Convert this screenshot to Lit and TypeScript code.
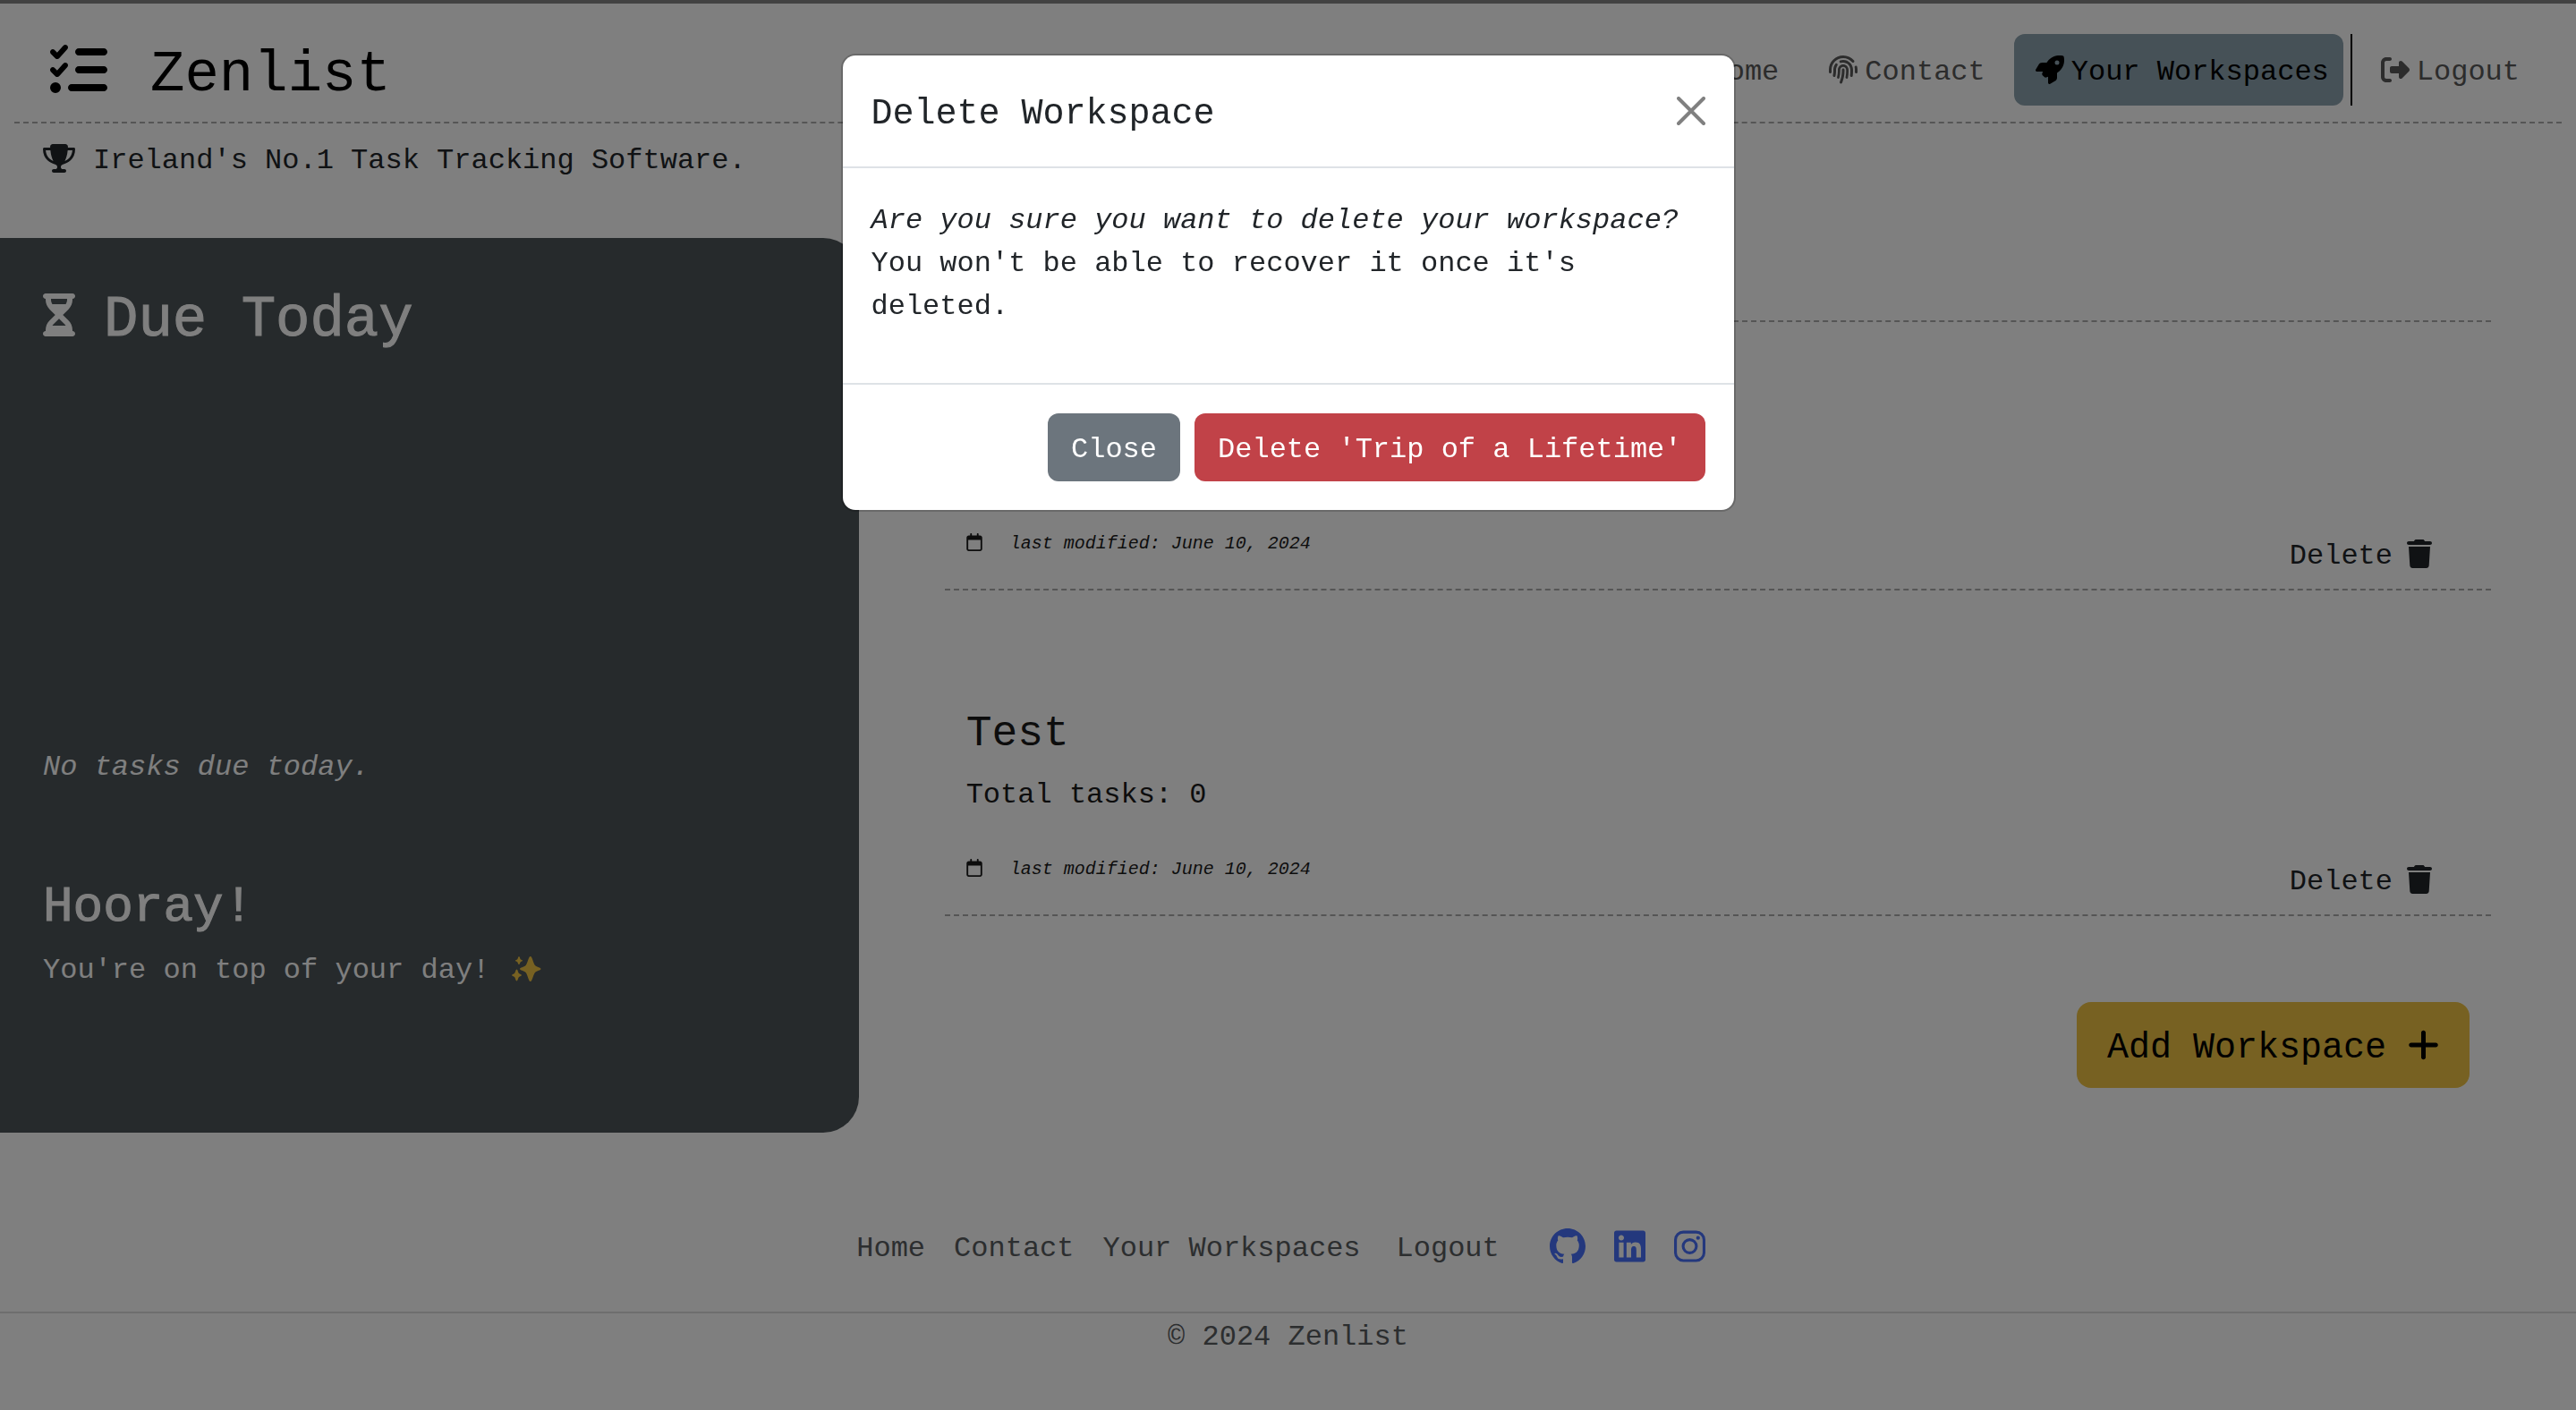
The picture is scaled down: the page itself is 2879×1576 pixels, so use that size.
import { LitElement, html, css, svg } from "lit";
import { customElement, property } from "lit/decorators.js";

interface Glyph {
  box: string;
  d: string;
}

const GLYPHS: Record<string, Glyph> = {
  listCheck: {
    box: "0 0 512 512",
    d: "M152.1 38.2c9.9 8.9 10.7 24 1.8 33.9l-72 80c-4.4 4.9-10.6 7.8-17.2 7.9s-12.9-2.4-17.6-7L7 113C-2.3 103.6-2.3 88.4 7 79s24.6-9.4 33.9 0l22.1 22.1 55.1-61.2c8.9-9.9 24-10.7 33.9-1.8zm0 160c9.9 8.9 10.7 24 1.8 33.9l-72 80c-4.4 4.9-10.6 7.8-17.2 7.9s-12.9-2.4-17.6-7L7 273c-9.4-9.4-9.4-24.6 0-33.9s24.6-9.4 33.9 0l22.1 22.1 55.1-61.2c8.9-9.9 24-10.7 33.9-1.8zM224 96c0-17.7 14.3-32 32-32l224 0c17.7 0 32 14.3 32 32s-14.3 32-32 32l-224 0c-17.7 0-32-14.3-32-32zm0 160c0-17.7 14.3-32 32-32l224 0c17.7 0 32 14.3 32 32s-14.3 32-32 32l-224 0c-17.7 0-32-14.3-32-32zM160 416c0-17.7 14.3-32 32-32l288 0c17.7 0 32 14.3 32 32s-14.3 32-32 32l-288 0c-17.7 0-32-14.3-32-32zM48 368a48 48 0 1 1 0 96 48 48 0 1 1 0-96z",
  },
  trophy: {
    box: "0 0 576 512",
    d: "M400 0L176 0c-26.5 0-48.1 21.8-47.1 48.2c.2 5.3 .4 10.6 .7 15.8L24 64C10.7 64 0 74.7 0 88c0 92.6 33.5 157 78.5 200.7c44.3 43.1 98.3 64.8 138.1 75.8c23.4 6.5 39.4 26 39.4 45.6c0 20.9-17 37.9-37.9 37.9L192 448c-17.7 0-32 14.3-32 32s14.3 32 32 32l192 0c17.7 0 32-14.3 32-32s-14.3-32-32-32l-26.1 0C337 448 320 431 320 410.1c0-19.6 15.9-39.2 39.4-45.6c39.9-11 93.9-32.7 138.2-75.8C542.5 245 576 180.6 576 88c0-13.3-10.7-24-24-24L446.4 64c.3-5.2 .5-10.4 .7-15.8C448.1 21.8 426.5 0 400 0zM48.9 112l84.4 0c9.1 90.1 29.2 150.3 51.9 190.6c-24.9-11-50.8-26.5-73.2-48.3c-32-31.1-58-76-63-142.3zM464.1 254.3c-22.4 21.8-48.3 37.3-73.2 48.3c22.7-40.3 42.8-100.5 51.9-190.6l84.4 0c-5.1 66.3-31.1 111.2-63 142.3z",
  },
  hourglass: {
    box: "0 0 384 512",
    d: "M32 0C14.3 0 0 14.3 0 32S14.3 64 32 64l0 11c0 42.4 16.9 83.1 46.9 113.1L146.7 256 78.9 323.9C48.9 353.9 32 394.6 32 437l0 11c-17.7 0-32 14.3-32 32s14.3 32 32 32l32 0 256 0 32 0c17.7 0 32-14.3 32-32s-14.3-32-32-32l0-11c0-42.4-16.9-83.1-46.9-113.1L237.3 256l67.9-67.9c30-30 46.9-70.7 46.9-113.1l0-11c17.7 0 32-14.3 32-32s-14.3-32-32-32L320 0 64 0 32 0zM96 75l0-11 192 0 0 11c0 19-5.6 37.4-16 53L112 128c-10.3-15.6-16-34-16-53zm16 309c3.5-5.3 7.6-10.3 12.1-14.9L192 301.3l67.9 67.9c4.6 4.6 8.6 9.6 12.1 14.9L112 384z",
  },
  house: {
    box: "0 0 576 512",
    d: "M575.8 255.5c0 18-15 32.1-32 32.1l-32 0 .7 160.2c0 2.7-.2 5.4-.5 8.1l0 16.2c0 22.1-17.9 40-40 40l-16 0c-1.1 0-2.2 0-3.3-.1c-1.4 .1-2.8 .1-4.2 .1L416 512l-24 0c-22.1 0-40-17.9-40-40l0-24 0-64c0-17.7-14.3-32-32-32l-64 0c-17.7 0-32 14.3-32 32l0 64 0 24c0 22.1-17.9 40-40 40l-24 0-31.9 0c-1.5 0-3-.1-4.5-.2c-1.2 .1-2.4 .2-3.6 .2l-16 0c-22.1 0-40-17.9-40-40l0-112c0-.9 0-1.9 .1-2.8l0-69.7-32 0c-18 0-32-14-32-32.1c0-9 3-17 10-24L266.4 8c7-7 15-8 22-8s15 2 21 7L564.8 231.5c8 7 12 15 11 24z",
  },
  fingerprint: {
    box: "0 0 512 512",
    d: "M48 256C48 141.1 141.1 48 256 48c63.1 0 119.6 28.1 157.8 72.5c8.6 10.1 23.8 11.2 33.8 2.6s11.2-23.8 2.6-33.8C403.3 34.6 333.7 0 256 0C114.6 0 0 114.6 0 256l0 40c0 13.3 10.7 24 24 24s24-10.7 24-24l0-40zm458.5-52.9c-2.7-13-15.5-21.3-28.4-18.5s-21.3 15.5-18.5 28.4c2.9 13.9 4.5 28.3 4.5 43.1l0 40c0 13.3 10.7 24 24 24s24-10.7 24-24l0-40c0-18.1-1.9-35.8-5.5-52.9zM256 80c-19 0-37.4 3-54.5 8.6c-15.2 5-18.7 23.7-8.3 35.9c7.1 8.3 18.8 10.8 29.4 7.9c10.6-2.9 21.8-4.4 33.4-4.4c70.7 0 128 57.3 128 128l0 24.9c0 25.2-1.5 50.3-4.4 75.3c-1.7 14.6 9.4 27.8 24.2 27.8c11.8 0 21.9-8.6 23.3-20.3c3.3-27.4 5-55 5-82.7l0-24.9c0-97.2-78.8-176-176-176zM150.7 148.7c-9.1-10.6-25.3-11.4-33.9-.4C93.7 178 80 215.4 80 256l0 24.9c0 24.2-2.6 48.4-7.8 71.9C68.8 368.4 80.1 384 96.1 384c10.5 0 19.9-7 22.2-17.3c6.4-28.1 9.7-56.8 9.7-85.8l0-24.9c0-27.2 8.5-52.4 22.9-73.1c7.2-10.4 8-24.6-.2-34.2zM256 160c-53 0-96 43-96 96l0 24.9c0 35.9-4.6 71.5-13.8 106.1c-3.8 14.3 6.7 29 21.5 29c9.5 0 17.9-6.2 20.4-15.4c10.5-39 15.9-79.2 15.9-119.7l0-24.9c0-28.7 23.3-52 52-52s52 23.3 52 52l0 24.9c0 36.3-3.5 72.4-10.4 107.9c-2.7 13.9 7.7 27.2 21.8 27.2c10.2 0 19-7 21-17c7.7-38.8 11.6-78.3 11.6-118.1l0-24.9c0-53-43-96-96-96zm24 96c0-13.3-10.7-24-24-24s-24 10.7-24 24l0 24.9c0 59.9-11 119.3-32.5 175.2l-5.9 15.3c-4.8 12.4 1.4 26.3 13.8 31s26.3-1.4 31-13.8l5.9-15.3C267.9 411.9 280 346.7 280 280.9l0-24.9z",
  },
  rocket: {
    box: "0 0 512 512",
    d: "M156.6 384.9L125.7 354c-8.5-8.5-11.5-20.8-7.7-32.2c3-8.9 7-20.5 11.8-33.8L24 288c-8.6 0-16.6-4.6-20.9-12.1s-4.2-16.7 .2-24.1l52.5-88.5c13-21.9 36.5-35.3 61.9-35.3l82.3 0c2.4-4 4.8-7.7 7.2-11.3C289.1-4.1 411.1-8.1 483.9 5.3c11.6 2.1 20.6 11.2 22.8 22.8c13.4 72.9 9.3 194.8-111.4 276.7c-3.5 2.4-7.3 4.8-11.3 7.2v82.3c0 25.4-13.4 49-35.3 61.9l-88.5 52.5c-7.4 4.4-16.6 4.5-24.1 .2s-12.1-12.2-12.1-20.9V380.8c-14.1 4.9-26.4 8.9-35.7 11.9c-11.2 3.6-23.4 .5-31.8-7.8zM384 168a40 40 0 1 0 0-80 40 40 0 1 0 0 80z",
  },
  logout: {
    box: "0 0 512 512",
    d: "M377.9 105.9L500.7 228.7c7.2 7.2 11.3 17.1 11.3 27.3s-4.1 20.1-11.3 27.3L377.9 406.1c-6.4 6.4-15 9.9-24 9.9c-18.7 0-33.9-15.2-33.9-33.9l0-62.1-128 0c-17.7 0-32-14.3-32-32l0-64c0-17.7 14.3-32 32-32l128 0 0-62.1c0-18.7 15.2-33.9 33.9-33.9c9 0 17.6 3.6 24 9.9zM160 96L96 96c-17.7 0-32 14.3-32 32l0 256c0 17.7 14.3 32 32 32l64 0c17.7 0 32 14.3 32 32s-14.3 32-32 32l-64 0c-53 0-96-43-96-96L0 128C0 75 43 32 96 32l64 0c17.7 0 32 14.3 32 32s-14.3 32-32 32z",
  },
  calendar: {
    box: "0 0 448 512",
    d: "M152 24c0-13.3-10.7-24-24-24s-24 10.7-24 24l0 40L64 64C28.7 64 0 92.7 0 128l0 16 0 48L0 448c0 35.3 28.7 64 64 64l320 0c35.3 0 64-28.7 64-64l0-256 0-48 0-16c0-35.3-28.7-64-64-64l-40 0 0-40c0-13.3-10.7-24-24-24s-24 10.7-24 24l0 40L152 64l0-40zM48 192l352 0 0 256c0 8.8-7.2 16-16 16L64 464c-8.8 0-16-7.2-16-16l0-256z",
  },
  trash: {
    box: "0 0 448 512",
    d: "M135.2 17.7L128 32 32 32C14.3 32 0 46.3 0 64S14.3 96 32 96l384 0c17.7 0 32-14.3 32-32s-14.3-32-32-32l-96 0-7.2-14.3C307.4 6.8 296.3 0 284.2 0L163.8 0c-12.1 0-23.2 6.8-28.6 17.7zM416 128L32 128 53.2 467c1.6 25.3 22.6 45 47.9 45l245.8 0c25.3 0 46.3-19.7 47.9-45L416 128z",
  },
  plus: {
    box: "0 0 448 512",
    d: "M256 80c0-17.7-14.3-32-32-32s-32 14.3-32 32l0 144L48 224c-17.7 0-32 14.3-32 32s14.3 32 32 32l144 0 0 144c0 17.7 14.3 32 32 32s32-14.3 32-32l0-144 144 0c17.7 0 32-14.3 32-32s-14.3-32-32-32l-144 0 0-144z",
  },
  sparkles: {
    box: "0 0 36 32",
    d: "M21.8 3C24 3 25 11 27 13C29 15 33.5 15.5 33.5 17C33.5 18.5 29 19 27 21C25 23 24 31 21.8 31C19.6 31 18.6 23 16.6 21C14.6 19 10 18.5 10 17C10 15.5 14.6 15 16.6 13C18.6 11 19.6 3 21.8 3zM9 3C10 3 10 5.5 10.8 6.2C11.5 6.9 13 7 13 7.7C13 8.4 11.5 8.5 10.8 9.2C10 9.9 10 12 9 12C8 12 8 9.9 7.2 9.2C6.5 8.5 5 8.4 5 7.7C5 7 6.5 6.9 7.2 6.2C8 5.5 8 3 9 3zM6.5 17.5C7.7 17.5 8 21 9 22C10 23 12 23.2 12 24C12 24.8 10 25 9 26C8 27 7.7 30.5 6.5 30.5C5.3 30.5 5 27 4 26C3 25 1 24.8 1 24C1 23.2 3 23 4 22C5 21 5.3 17.5 6.5 17.5z",
  },
  github: {
    box: "0 0 16 16",
    d: "M8 0C3.58 0 0 3.58 0 8c0 3.54 2.29 6.53 5.47 7.59.4.07.55-.17.55-.38 0-.19-.01-.82-.01-1.49-2.01.37-2.53-.49-2.69-.94-.09-.23-.48-.94-.82-1.13-.28-.15-.68-.52-.01-.53.63-.01 1.08.58 1.23.82.72 1.21 1.87.87 2.33.66.07-.52.28-.87.51-1.07-1.78-.2-3.64-.89-3.64-3.95 0-.87.31-1.59.82-2.15-.08-.2-.36-1.02.08-2.12 0 0 .67-.21 2.2.82.64-.18 1.32-.27 2-.27s1.36.09 2 .27c1.53-1.04 2.2-.82 2.2-.82.44 1.1.16 1.92.08 2.12.51.56.82 1.27.82 2.15 0 3.07-1.87 3.75-3.65 3.95.29.25.54.73.54 1.48 0 1.07-.01 1.93-.01 2.2 0 .21.15.46.55.38A8.01 8.01 0 0 0 16 8c0-4.42-3.58-8-8-8z",
  },
  linkedin: {
    box: "0 0 448 512",
    d: "M416 32H31.9C14.3 32 0 46.5 0 64.3v383.4C0 465.5 14.3 480 31.9 480H416c17.6 0 32-14.5 32-32.3V64.3c0-17.8-14.4-32.3-32-32.3zM135.4 416H69V202.2h66.5V416zm-33.2-243c-21.3 0-38.5-17.3-38.5-38.5S80.9 96 102.2 96c21.2 0 38.5 17.3 38.5 38.5 0 21.3-17.2 38.5-38.5 38.5zm282.1 243h-66.4V312c0-24.8-.5-56.7-34.5-56.7-34.6 0-39.9 27-39.9 54.9V416h-66.4V202.2h63.7v29.2h.9c8.9-16.8 30.6-34.5 62.9-34.5 67.2 0 79.7 44.3 79.7 101.9V416z",
  },
  instagram: { box: "0 0 448 512", d: "" },
  close: { box: "0 0 32 32", d: "" },
};

// Glyphs built from strokes rather than one filled outline.
const STROKED: Record<string, unknown> = {
  instagram: svg`
    <rect x="20" y="52" width="408" height="408" rx="112" fill="none" stroke="currentColor" stroke-width="40"></rect>
    <circle cx="224" cy="256" r="95" fill="none" stroke="currentColor" stroke-width="40"></circle>
    <circle cx="343" cy="137" r="27"></circle>`,
  close: svg`<path d="M2 2L30 30M30 2L2 30" fill="none" stroke="currentColor" stroke-width="4" stroke-linecap="round"></path>`,
};

@customElement("ui-icon")
export class UiIcon extends LitElement {
  @property() name = "";

  static styles = css`
    :host {
      display: block;
      flex: none;
    }
    .glyph {
      display: block;
      width: 100%;
      height: 100%;
      fill: currentColor;
    }
  `;

  render() {
    const glyph = GLYPHS[this.name];
    return html`<svg class="glyph" viewBox=${glyph.box} aria-hidden="true">
      ${STROKED[this.name] ?? svg`<path d=${glyph.d}></path>`}
    </svg>`;
  }
}

interface Workspace {
  title?: string;
  total?: number;
  modified: string;
}

@customElement("app-root")
export class AppRoot extends LitElement {
  private workspaces: Workspace[] = [
    { modified: "June 10, 2024" },
    { title: "Test", total: 0, modified: "June 10, 2024" },
  ];

  static styles = css`
    :host {
      display: block;
      min-height: 100vh;
      box-sizing: border-box;
      border-top: 4px solid #848484;
      background: #fff;
      color: #212529;
      font-family: "Liberation Mono", monospace;
    }
    *,
    *::before,
    *::after {
      box-sizing: border-box;
    }
    h1, h2, h3, p, ul {
      margin: 0;
      padding: 0;
      font-weight: 400;
    }
    ul {
      list-style: none;
    }
    a {
      color: inherit;
      text-decoration: none;
    }
    button {
      border: 0;
      background: none;
      color: inherit;
      font-family: inherit;
      padding: 0;
    }

    /* Type scale */
    .t-xs {
      font-size: 20px;
      line-height: 26px;
      padding-top: 4px;
    }
    .t-sm {
      font-size: 32px;
      line-height: 42px;
      padding-top: 6px;
    }
    .t-md {
      font-size: 40px;
      line-height: 52px;
      padding-top: 8px;
    }
    .t-lg {
      font-size: 48px;
      line-height: 52px;
      padding-top: 8px;
    }
    .t-xl {
      font-size: 56px;
      line-height: 60px;
      padding-top: 10px;
    }
    .t-xxl {
      font-size: 64px;
      line-height: 68px;
      padding-top: 12px;
    }
    .italic {
      font-style: italic;
    }
    .medium {
      -webkit-text-stroke: 1px currentColor;
    }

    /* Icon sizes */
    .i-20 { width: 18px; height: 20px; }
    .i-32 { width: 32px; height: 32px; }
    .i-32n { width: 28px; height: 32px; }
    .i-32w { width: 36px; height: 32px; }
    .i-40 { width: 40px; height: 40px; }
    .i-40n { width: 35px; height: 40px; }
    .i-48n { width: 36px; height: 48px; }
    .i-64 { width: 64px; height: 64px; }

    .header {
      display: flex;
      justify-content: space-between;
      align-items: center;
      margin: 0 16px;
      padding: 34px 31px 18px 40px;
      border-bottom: 2px dashed #aaa;
    }
    .brand {
      display: flex;
      align-items: center;
      gap: 48px;
      color: #000;
    }
    .nav {
      display: flex;
      align-items: stretch;
    }
    .nav-link {
      display: flex;
      align-items: center;
      gap: 8px;
      padding: 16px 16px 16px 24px;
      color: #595959;
    }
    .nav-item + .nav-item {
      margin-left: 16px;
    }
    .nav-item.active .nav-link {
      border-radius: 12px;
      background: #8ca2ae;
      color: #000;
    }
    .nav-item.nav-item.last {
      margin-left: 8px;
      padding-left: 8px;
      border-left: 2px solid #000;
    }

    .tagline {
      display: flex;
      align-items: center;
      gap: 20px;
      padding: 15px 48px 65px;
    }

    .main {
      display: grid;
      grid-template-columns: 1fr 2fr;
    }
    .today {
      display: flex;
      flex-direction: column;
      min-height: 1000px;
      padding: 46px 48px 160px;
      border-radius: 0 40px 40px 0;
      background: #4c5458;
      color: #fff;
    }
    .today-title {
      display: flex;
      align-items: center;
      gap: 32px;
    }
    .today-empty {
      margin-top: auto;
      margin-bottom: 95px;
    }
    .today-note {
      display: flex;
      align-items: center;
      gap: 24px;
      margin-top: 14px;
    }
    .spark {
      color: #eec244;
    }

    .spaces {
      display: flex;
      flex-direction: column;
      padding: 92px 95px 0 96px;
    }
    .list {
      display: flex;
      flex-direction: column;
      gap: 64px;
      border-top: 2px dashed #aaa;
    }
    .item {
      display: flex;
      justify-content: space-between;
      min-height: 300px;
      padding: 62px 66px 15px 24px;
      border-bottom: 2px dashed #aaa;
    }
    .item-body {
      display: flex;
      flex-direction: column;
      gap: 16px;
      padding-bottom: 22px;
      color: #1a1a1a;
    }
    .item-meta {
      display: flex;
      align-items: center;
      gap: 31px;
      margin-top: auto;
    }
    .delete {
      display: flex;
      align-items: center;
      align-self: flex-end;
      gap: 16px;
    }
    .add {
      display: flex;
      align-items: center;
      align-self: flex-end;
      gap: 24px;
      margin: 96px 24px 0 0;
      padding: 18px 34px;
      border-radius: 16px;
      background: #eec244;
      color: #000;
    }

    .footer {
      color: #595c5f;
      text-align: center;
    }
    .footer-row {
      display: flex;
      justify-content: center;
      align-items: center;
      padding: 103px 0 49px;
      border-bottom: 2px solid #dcdcdc;
    }
    .footer-links,
    .social {
      display: flex;
      align-items: center;
    }
    .footer-link {
      display: block;
      padding-left: 16px;
      padding-right: 16px;
    }
    .footer-item.last {
      margin-left: 8px;
    }
    .social {
      margin: 0 16px 0 24px;
      color: #4870fa;
    }
    .social-link {
      display: block;
      padding: 0 16px;
    }

    .backdrop {
      position: fixed;
      inset: 0;
      display: flex;
      justify-content: center;
      align-items: flex-start;
      padding-top: 60px;
      background: rgba(0, 0, 0, 0.5);
    }
    .modal {
      width: 1000px;
      max-width: 100%;
      border: 2px solid rgba(0, 0, 0, 0.175);
      border-radius: 16px;
      background: #fff;
      background-clip: padding-box;
    }
    .modal-head {
      display: flex;
      justify-content: space-between;
      align-items: center;
      padding: 32px;
      border-bottom: 2px solid #dee2e6;
    }
    .modal-close {
      color: #808080;
    }
    .modal-body {
      padding: 35px 32px 61px;
      font-size: 32px;
      line-height: 48px;
    }
    .modal-foot {
      display: flex;
      justify-content: flex-end;
      gap: 16px;
      padding: 32px;
      border-top: 2px solid #dee2e6;
    }
    .btn {
      padding: 14px 26px;
      border-radius: 12px;
      color: #fff;
    }
    .btn.secondary {
      background: #6c757d;
    }
    .btn.danger {
      background: #c14248;
    }
    .btn-label {
      display: block;
    }
  `;

  private navItem(icon: string, size: string, label: string, state = "") {
    return html`<li class="nav-item ${state}">
      <a class="nav-link" href="#">
        <ui-icon class=${size} name=${icon}></ui-icon>
        <span class="t-sm">${label}</span>
      </a>
    </li>`;
  }

  private workspace(item: Workspace) {
    return html`<li class="item">
      <div class="item-body">
        ${item.title === undefined ? null : html`<h3 class="t-lg">${item.title}</h3>`}
        ${item.total === undefined ? null : html`<p class="t-sm">Total tasks: ${item.total}</p>`}
        <div class="item-meta">
          <ui-icon class="i-20" name="calendar"></ui-icon>
          <span class="t-xs italic">last modified: ${item.modified}</span>
        </div>
      </div>
      <button class="delete" type="button">
        <span class="t-sm">Delete</span>
        <ui-icon class="i-32n" name="trash"></ui-icon>
      </button>
    </li>`;
  }

  render() {
    return html`
      <header class="header">
        <a class="brand" href="#">
          <ui-icon class="i-64" name="listCheck"></ui-icon>
          <span class="t-xxl">Zenlist</span>
        </a>
        <nav>
          <ul class="nav">
            ${this.navItem("house", "i-32w", "Home")}
            ${this.navItem("fingerprint", "i-32", "Contact")}
            ${this.navItem("rocket", "i-32", "Your Workspaces", "active")}
            ${this.navItem("logout", "i-32", "Logout", "last")}
          </ul>
        </nav>
      </header>
      <div class="tagline">
        <ui-icon class="i-32w" name="trophy"></ui-icon>
        <p class="t-sm">Ireland's No.1 Task Tracking Software.</p>
      </div>
      <main class="main">
        <section class="today">
          <div class="today-title">
            <ui-icon class="i-48n" name="hourglass"></ui-icon>
            <h1 class="t-xxl medium">Due Today</h1>
          </div>
          <p class="today-empty t-sm italic">No tasks due today.</p>
          <h2 class="t-xl medium">Hooray!</h2>
          <div class="today-note">
            <p class="t-sm">You're on top of your day!</p>
            <ui-icon class="i-32w spark" name="sparkles"></ui-icon>
          </div>
        </section>
        <section class="spaces">
          <ul class="list">
            ${this.workspaces.map((item) => this.workspace(item))}
          </ul>
          <button class="add" type="button">
            <span class="t-md">Add Workspace</span>
            <ui-icon class="i-40n" name="plus"></ui-icon>
          </button>
        </section>
      </main>
      <footer class="footer">
        <div class="footer-row">
          <ul class="footer-links">
            <li><a class="footer-link t-sm" href="#">Home</a></li>
            <li><a class="footer-link t-sm" href="#">Contact</a></li>
            <li><a class="footer-link t-sm" href="#">Your Workspaces</a></li>
            <li class="footer-item last"><a class="footer-link t-sm" href="#">Logout</a></li>
          </ul>
          <div class="social">
            <a class="social-link" href="#" aria-label="GitHub"><ui-icon class="i-40" name="github"></ui-icon></a>
            <a class="social-link" href="#" aria-label="LinkedIn"><ui-icon class="i-40n" name="linkedin"></ui-icon></a>
            <a class="social-link" href="#" aria-label="Instagram"><ui-icon class="i-40n" name="instagram"></ui-icon></a>
          </div>
        </div>
        <p class="t-sm">© 2024 Zenlist</p>
      </footer>
      <div class="backdrop">
        <div class="modal" role="dialog" aria-modal="true" aria-labelledby="modal-title">
          <div class="modal-head">
            <h2 class="t-md" id="modal-title">Delete Workspace</h2>
            <button class="modal-close" type="button" aria-label="Close">
              <ui-icon class="i-32" name="close"></ui-icon>
            </button>
          </div>
          <div class="modal-body">
            <p class="italic">Are you sure you want to delete your workspace?</p>
            <p>You won't be able to recover it once it's deleted.</p>
          </div>
          <div class="modal-foot">
            <button class="btn secondary" type="button"><span class="btn-label t-sm">Close</span></button>
            <button class="btn danger" type="button">
              <span class="btn-label t-sm">Delete 'Trip of a Lifetime'</span>
            </button>
          </div>
        </div>
      </div>
    `;
  }
}
